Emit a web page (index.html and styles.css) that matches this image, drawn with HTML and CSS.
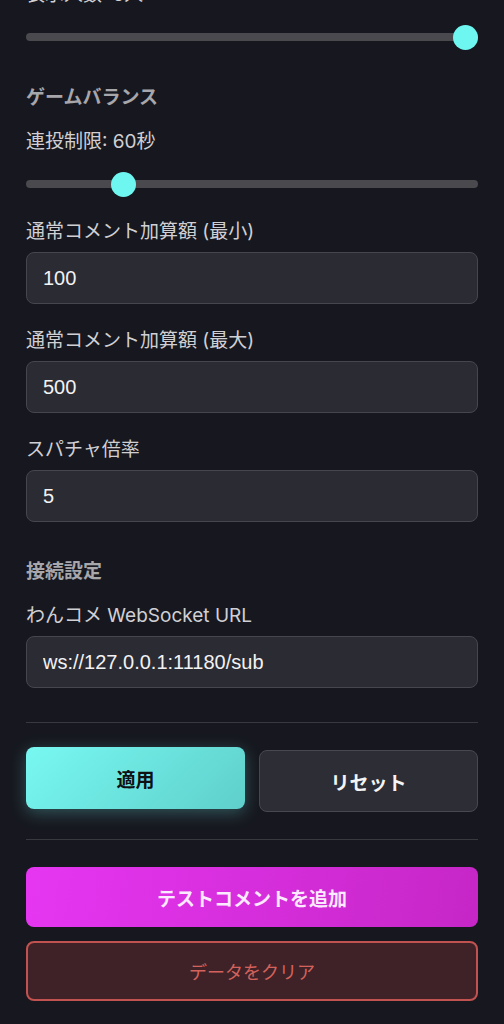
FILE: index.html
```html
<!DOCTYPE html>
<html lang="ja">
<head>
<meta charset="utf-8">
<title>設定</title>
<link rel="stylesheet" href="styles.css">
</head>
<body>
<div class="panel">
  <section class="group">
    <div class="field field-range">
      <label class="label range-label">表示人数: 5人</label>
      <input class="range" type="range" min="1" max="5" value="5">
    </div>
  </section>

  <section class="group">
    <h3 class="group-title">ゲームバランス</h3>
    <div class="field field-range">
      <label class="label range-label">連投制限: 60秒</label>
      <input class="range" type="range" min="0" max="300" value="60">
    </div>
    <div class="field">
      <label class="label">通常コメント加算額 (最小)</label>
      <input class="text-input" type="text" value="100">
    </div>
    <div class="field">
      <label class="label">通常コメント加算額 (最大)</label>
      <input class="text-input" type="text" value="500">
    </div>
    <div class="field">
      <label class="label">スパチャ倍率</label>
      <input class="text-input" type="text" value="5">
    </div>
  </section>

  <section class="group group-last">
    <h3 class="group-title">接続設定</h3>
    <div class="field">
      <label class="label">わんコメ WebSocket URL</label>
      <input class="text-input" type="text" value="ws://127.0.0.1:11180/sub">
    </div>
  </section>

  <div class="divider"></div>

  <div class="button-row">
    <button class="btn btn-apply">適用</button>
    <button class="btn btn-reset">リセット</button>
  </div>

  <div class="divider"></div>

  <button class="btn btn-test">テストコメントを追加</button>
  <button class="btn btn-clear">データをクリア</button>
</div>
</body>
</html>
```

FILE: styles.css
```css
html, body {
  margin: 0;
  padding: 0;
  background: #17181f;
}

body {
  font-family: "Inter", "Noto Sans CJK JP", sans-serif;
  color: #d2d2d6;
  overflow: hidden;
}

.panel {
  margin-top: -18px;
  padding: 0 26px;
}

.group {
  padding-bottom: 14px;
}

.group-last {
  padding-bottom: 0;
  margin-bottom: 34px;
}

.group-title {
  margin: 0 0 19px;
  font-size: 19px;
  line-height: 24px;
  font-weight: 700;
  color: #a6a6ab;
}

.field {
  margin-bottom: 24px;
}

.field-range {
  margin-bottom: 26px;
}

.label {
  display: block;
  font-size: 19px;
  line-height: 25px;
  margin-bottom: 8px;
  color: #d0d0d4;
}

.range-label {
  margin-bottom: 21px;
}

.range {
  -webkit-appearance: none;
  appearance: none;
  display: block;
  width: 100%;
  height: 18px;
  margin: 0;
  background: transparent;
}

.range::-webkit-slider-runnable-track {
  height: 8px;
  border-radius: 4px;
  background: #4a4a4e;
}

.range::-webkit-slider-thumb {
  -webkit-appearance: none;
  appearance: none;
  width: 25px;
  height: 25px;
  margin-top: -8.5px;
  border-radius: 50%;
  background: #6ef6f1;
  border: none;
}

.text-input {
  display: block;
  box-sizing: border-box;
  width: 100%;
  height: 52px;
  padding: 0 16px;
  background: #2b2b33;
  border: 1px solid #46464e;
  border-radius: 8px;
  font-family: "Liberation Sans", "Noto Sans CJK JP", sans-serif;
  font-size: 20px;
  color: #f2f2f4;
  outline: none;
}

.divider {
  height: 1px;
  background: #38383f;
  margin: 27px 0;
}

.button-row {
  display: grid;
  grid-template-columns: 1fr 1fr;
  gap: 14px;
  align-items: start;
}

.btn {
  display: block;
  box-sizing: border-box;
  width: 100%;
  border-radius: 8px;
  font-family: "Inter", "Noto Sans CJK JP", sans-serif;
  font-size: 19px;
  font-weight: 700;
  cursor: pointer;
}

.btn-apply {
  height: 62px;
  border: none;
  color: #0f1114;
  background: linear-gradient(135deg, #78f8f1 0%, #5fcfcb 100%);
  box-shadow: 0 4px 16px rgba(110, 246, 241, 0.28);
  transform: translateY(-3px);
}

.btn-reset {
  height: 62px;
  border: 1px solid #48484f;
  background: #2d2d35;
  color: #f4f4f6;
}

.btn-test {
  height: 60px;
  border: none;
  color: #fbeaff;
  background: linear-gradient(100deg, #e636f2 0%, #c626c6 100%);
}

.btn-clear {
  height: 60px;
  margin-top: 14px;
  border: 2px solid #c2524f;
  background: #3f2228;
  color: #d4625c;
  font-size: 18px;
  font-weight: 400;
}
```
